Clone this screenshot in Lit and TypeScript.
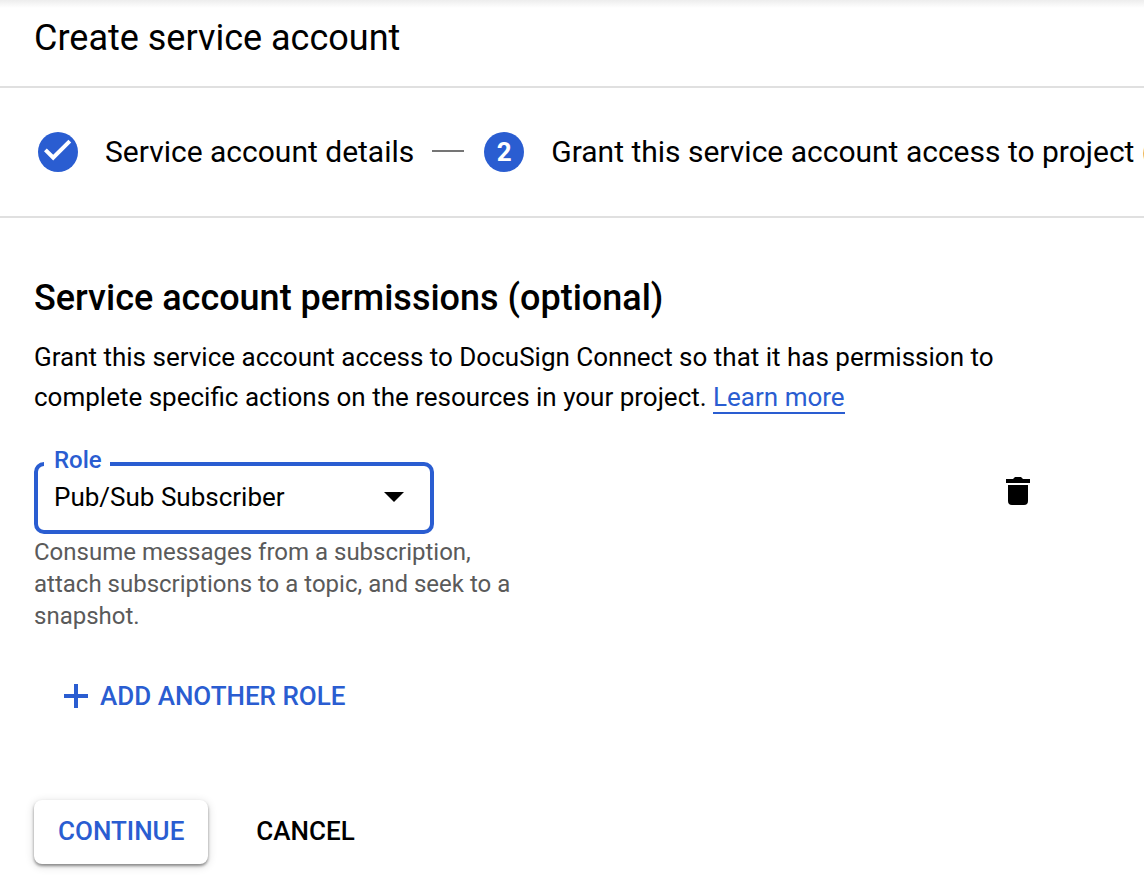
import { LitElement, html, css } from "lit";
import { customElement, state } from "lit/decorators.js";

@customElement("app-root")
export class AppRoot extends LitElement {
  static styles = css`
    :host {
      display: block;
      min-height: 100vh;
      overflow-x: hidden;
      background: #fff;
      color: #000;
      font-family: Roboto, "Liberation Sans", sans-serif;
      font-size: 26px;
      line-height: 40px;
      --accent: #2a5dd1;
      --rule: #e0e0e0;
    }
    *,
    *::before {
      box-sizing: border-box;
    }
    h1,
    h2,
    p,
    ol {
      margin: 0;
      padding: 0;
    }
    button,
    select {
      font: inherit;
      color: inherit;
      border: 0;
      margin: 0;
      padding: 0;
      background: none;
      cursor: pointer;
    }
    svg {
      display: block;
      fill: currentColor;
    }
    .header {
      padding: 16px 34px 26px;
      border-bottom: 2px solid var(--rule);
      background: linear-gradient(#ededed, #fff 8px);
    }
    .title {
      font-size: 36px;
      line-height: 44px;
      font-weight: 400;
    }
    .steps {
      display: flex;
      align-items: center;
      padding: 44px 38px;
      border-bottom: 2px solid var(--rule);
      list-style: none;
      font-size: 30px;
      white-space: nowrap;
      overflow: hidden;
    }
    .step {
      display: flex;
      flex: none;
      align-items: center;
      gap: 27px;
    }
    .step + .step::before {
      content: "";
      width: 32px;
      height: 2px;
      margin: 0 -7px 2px 18px;
      background: #757575;
    }
    .badge {
      display: grid;
      place-items: center;
      width: 40px;
      height: 40px;
      border-radius: 50%;
      background: var(--accent);
      color: #fff;
      font-size: 26px;
      font-weight: 700;
    }
    .main {
      padding: 58px 102px 20px 34px;
    }
    .heading {
      margin-bottom: 17px;
      font-size: 36px;
      line-height: 44px;
      font-weight: 500;
    }
    .link {
      color: var(--accent);
      text-decoration: none;
      border-bottom: 2px solid currentColor;
    }
    .row {
      display: flex;
      justify-content: space-between;
      align-items: center;
      margin-top: 31px;
    }
    .field {
      width: 400px;
      min-width: 0;
      margin: 0;
      padding: 0 26px 16px 6px;
      border: 4px solid var(--accent);
      border-radius: 10px;
    }
    .legend {
      padding: 0 8px 8px 10px;
      color: var(--accent);
      font-size: 24px;
      line-height: 24px;
      font-weight: 500;
    }
    .legend label {
      display: block;
    }
    .picker {
      display: grid;
      align-items: center;
      padding-left: 10px;
    }
    .picker > * {
      grid-area: 1 / 1;
    }
    .picker svg {
      justify-self: end;
      pointer-events: none;
    }
    .select {
      appearance: none;
      width: 100%;
      height: 34px;
      line-height: 34px;
      outline: none;
    }
    .trash {
      display: grid;
      place-items: center;
      width: 48px;
      height: 48px;
    }
    .hint {
      max-width: 480px;
      margin-top: 2px;
      color: #5a5a5a;
      font-size: 24px;
      line-height: 32px;
    }
    .add {
      display: flex;
      align-items: center;
      gap: 12px;
      margin: 44px 0 0 30px;
      color: var(--accent);
      font-weight: 500;
    }
    .actions {
      display: flex;
      gap: 24px;
      margin-top: 84px;
    }
    .button {
      padding: 11px 24px 13px;
      border-radius: 8px;
      font-weight: 500;
    }
    .raised {
      color: var(--accent);
      background: #fff;
      box-shadow:
        0 2px 3px rgba(0, 0, 0, 0.4),
        0 2px 10px rgba(0, 0, 0, 0.16);
    }
  `;

  @state() private role = "Pub/Sub Subscriber";

  private pickRole(e: Event) {
    this.role = (e.target as HTMLSelectElement).value;
  }

  render() {
    return html`
      <header class="header"><h1 class="title">Create service account</h1></header>
      <ol class="steps">
        <li class="step">
          <span class="badge">
            <svg width="40" height="40" viewBox="0 0 40 40" role="img" aria-label="Done">
              <path d="M6 19.300 15.200 28.500 33.200 10.500 30.400 7.800 15.200 22.800 8.800 16.500z" />
            </svg>
          </span>
          <span>Service account details</span>
        </li>
        <li class="step" aria-current="step">
          <span class="badge">2</span>
          <span>Grant this service account access to project (optional)</span>
        </li>
      </ol>
      <main class="main">
        <h2 class="heading">Service account permissions (optional)</h2>
        <p>
          Grant this service account access to DocuSign Connect so that it has permission to
          complete specific actions on the resources in your project.
          <a class="link" href="#learn-more">Learn more</a>
        </p>
        <div class="row">
          <fieldset class="field">
            <legend class="legend"><label for="role">Role</label></legend>
            <div class="picker">
              <select class="select" id="role" .value=${this.role} @change=${this.pickRole}>
                <option>Pub/Sub Subscriber</option>
              </select>
              <svg width="20" height="10" viewBox="0 0 20 10" aria-hidden="true">
                <path d="M0 0h20L10 10z" />
              </svg>
            </div>
          </fieldset>
          <button class="trash" type="button" aria-label="Delete role">
            <svg width="24" height="28" viewBox="0 0 24 28" aria-hidden="true">
              <path d="M0 2h7l2-2h6l2 2h7v4H0zM2 8h20v16a4 4 0 0 1-4 4H6a4 4 0 0 1-4-4z" />
            </svg>
          </button>
        </div>
        <p class="hint">
          Consume messages from a subscription, attach subscriptions to a topic, and seek to a
          snapshot.
        </p>
        <button class="add" type="button">
          <svg width="24" height="24" viewBox="0 0 24 24" aria-hidden="true">
            <path d="M10 0h4v10h10v4H14v10h-4V14H0v-4h10z" />
          </svg>
          <span>ADD ANOTHER ROLE</span>
        </button>
        <div class="actions">
          <button class="button raised" type="button">CONTINUE</button>
          <button class="button" type="button">CANCEL</button>
        </div>
      </main>
    `;
  }
}
